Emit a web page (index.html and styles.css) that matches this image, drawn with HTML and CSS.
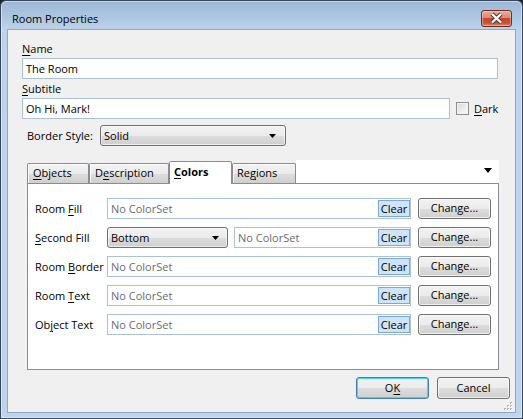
FILE: index.html
```html
<!DOCTYPE html>
<html lang="en">
<head>
<meta charset="utf-8">
<title>Room Properties</title>
<link rel="stylesheet" href="styles.css">
</head>
<body>
<div class="window">
  <div class="titlebar">
    <span class="title">Room Properties</span>
    <div class="close">
      <svg width="31" height="17" viewBox="0 0 31 17">
        <path d="M11 4 L20 12.5 M20 4 L11 12.5" stroke="#4a3a38" stroke-width="4.4" fill="none"/>
        <path d="M11 4 L20 12.5 M20 4 L11 12.5" stroke="#ffffff" stroke-width="2.4" fill="none"/>
      </svg>
    </div>
  </div>
  <div class="client">
    <div class="lbl"><u>N</u>ame</div>
    <div class="input name-input">The Room</div>
    <div class="lbl lbl-sub"><u>S</u>ubtitle</div>
    <div class="subtitle-row">
      <div class="input subtitle-input">Oh Hi, Mark!</div>
      <span class="checkbox"></span>
      <span class="check-label"><u>D</u>ark</span>
    </div>
    <div class="border-row">
      <span class="border-label">Border Style:</span>
      <div class="select border-select">
        <span>Solid</span>
        <svg class="arrow" width="7" height="4" viewBox="0 0 7 4"><path d="M0 0 H7 L3.5 4 Z" fill="#000"/></svg>
      </div>
    </div>
    <div class="tabstrip">
      <div class="tab tab-objects"><u>O</u>bjects</div>
      <div class="tab tab-desc">D<u>e</u>scription</div>
      <div class="tab tab-active tab-colors"><u>C</u>olors</div>
      <div class="tab tab-regions">Re<u>g</u>ions</div>
      <div class="tab-filler">
        <svg width="8" height="5" viewBox="0 0 8 5"><path d="M0 0 H8 L4 5 Z" fill="#000"/></svg>
      </div>
    </div>
    <div class="panel">
      <div class="crow">
        <span class="clabel">Room <u>F</u>ill</span>
        <div class="field"><span class="ph">No ColorSet</span><span class="clear">Clear</span></div>
        <div class="btn change">Change...</div>
      </div>
      <div class="crow">
        <span class="clabel"><u>S</u>econd Fill</span>
        <div class="select fill-select">
          <span>Bottom</span>
          <svg class="arrow" width="7" height="4" viewBox="0 0 7 4"><path d="M0 0 H7 L3.5 4 Z" fill="#000"/></svg>
        </div>
        <div class="field field-short"><span class="ph">No ColorSet</span><span class="clear">Clear</span></div>
        <div class="btn change">Change...</div>
      </div>
      <div class="crow">
        <span class="clabel">Room <u>B</u>order</span>
        <div class="field"><span class="ph">No ColorSet</span><span class="clear">Clear</span></div>
        <div class="btn change">Change...</div>
      </div>
      <div class="crow">
        <span class="clabel">Room <u>T</u>ext</span>
        <div class="field"><span class="ph">No ColorSet</span><span class="clear">Clear</span></div>
        <div class="btn change">Change...</div>
      </div>
      <div class="crow">
        <span class="clabel">Ob<u>j</u>ect Text</span>
        <div class="field"><span class="ph">No ColorSet</span><span class="clear">Clear</span></div>
        <div class="btn change">Change...</div>
      </div>
    </div>
    <div class="buttons">
      <div class="btn btn-default">O<u>K</u></div>
      <div class="btn">Cancel</div>
    </div>
    <svg class="grip" width="8" height="8" viewBox="0 0 8 8">
      <g fill="#b8b8b8">
        <rect x="6" y="0" width="2" height="2"/>
        <rect x="3" y="3" width="2" height="2"/><rect x="6" y="3" width="2" height="2"/>
        <rect x="0" y="6" width="2" height="2"/><rect x="3" y="6" width="2" height="2"/><rect x="6" y="6" width="2" height="2"/>
      </g>
      <g fill="#ffffff">
        <rect x="7" y="1" width="1" height="1"/>
        <rect x="4" y="4" width="1" height="1"/><rect x="7" y="4" width="1" height="1"/>
        <rect x="1" y="7" width="1" height="1"/><rect x="4" y="7" width="1" height="1"/><rect x="7" y="7" width="1" height="1"/>
      </g>
    </svg>
  </div>
</div>
</body>
</html>
```

FILE: styles.css
```css
* {
  box-sizing: border-box;
}

html, body {
  margin: 0;
  padding: 0;
}

body {
  background: #1d232b;
  font-family: "Open Sans", "Noto Sans", sans-serif;
  font-size: 11px;
  color: #000;
  width: 523px;
  height: 419px;
  overflow: hidden;
}

u {
  text-decoration: underline;
  text-underline-offset: 2px;
}

.window {
  width: 523px;
  height: 419px;
  border: 1px solid #39485a;
  border-radius: 6px 6px 0 0;
  background: linear-gradient(180deg, #9db8d6 0px, #afc8e2 18px, #bdd4ec 30px, #bdd4ec 100%);
  box-shadow: inset 0 0 0 1px rgba(255, 255, 255, 0.45);
  padding: 0 7px 6px 7px;
  display: flex;
  flex-direction: column;
}

.titlebar {
  height: 29px;
  display: flex;
  align-items: flex-start;
  flex-shrink: 0;
}

.title {
  padding: 10px 0 0 4px;
  line-height: 15px;
  font-size: 11px;
  color: #000;
}

.close {
  margin: 9px 3px 0 auto;
  width: 31px;
  height: 17px;
  border: 1px solid #6b2b23;
  border-radius: 3px;
  background: linear-gradient(180deg, #e9a99b 0%, #dc8a78 45%, #c8452f 50%, #c6513a 80%, #dc8d6c 100%);
  box-shadow: inset 0 0 0 1px rgba(255, 220, 210, 0.45);
  display: flex;
  align-items: center;
  justify-content: center;
}

.close svg {
  display: block;
  margin: -1px;
}

.client {
  position: relative;
  height: 382px;
  background: #f0f0f0;
  box-shadow: 0 0 0 1px #8ea7c4;
  padding: 11px 0 0 14px;
  display: flex;
  flex-direction: column;
  align-items: flex-start;
}

.lbl {
  height: 15px;
  line-height: 15px;
  margin-bottom: 2px;
}

.lbl-sub {
  margin-top: 2px;
}

.input {
  height: 21px;
  background: #fff;
  border: 1px solid #abc2dd;
  line-height: 19px;
  padding: 0 3px;
  white-space: nowrap;
}

.name-input {
  width: 476px;
}

.subtitle-row {
  display: flex;
  align-items: center;
}

.subtitle-input {
  width: 428px;
}

.checkbox {
  width: 13px;
  height: 13px;
  margin-left: 6px;
  border: 1px solid #8e8f8f;
  background: linear-gradient(135deg, #dcdcdc, #fbfbfb);
  box-shadow: inset 0 0 0 1px #f4f4f4;
}

.check-label {
  margin-left: 5px;
}

.border-row {
  margin-top: 6px;
  display: flex;
  align-items: center;
  height: 21px;
}

.border-label {
  width: 78px;
  padding-left: 5px;
}

.select {
  height: 21px;
  border: 1px solid #707070;
  border-radius: 3px;
  background: linear-gradient(180deg, #f2f2f2 0%, #ebebeb 50%, #dddddd 51%, #cfcfcf 100%);
  display: flex;
  align-items: center;
  justify-content: space-between;
  padding: 0 9px 0 3px;
  box-shadow: inset 0 0 0 1px rgba(255, 255, 255, 0.6);
}

.border-select {
  width: 186px;
}

.fill-select {
  width: 121px;
  padding-right: 8px;
}

.arrow {
  display: block;
}

.tabstrip {
  margin: 15px 0 0 5px;
  width: 472px;
  height: 22px;
  display: flex;
  align-items: flex-end;
  position: relative;
  z-index: 1;
}

.tab {
  height: 20px;
  border: 1px solid #898c95;
  border-bottom: none;
  border-radius: 2px 2px 0 0;
  background: linear-gradient(180deg, #f3f3f3 0%, #ebebeb 50%, #dddddd 51%, #cfcfcf 100%);
  box-shadow: inset 1px 1px 0 rgba(255, 255, 255, 0.8);
  line-height: 17px;
  padding-left: 5px;
  white-space: nowrap;
}

.tab-objects { width: 62px; }
.tab-desc { width: 80px; }
.tab-colors { width: 63px; }
.tab-regions { width: 64px; padding-left: 4px; }

.tab-active {
  height: 23px;
  margin-bottom: -1px;
  background: #fff;
  box-shadow: none;
  font-weight: 700;
  padding: 1px 0 0 4px;
}

.tab-filler {
  flex: 1;
  height: 23px;
  background: #fff;
  display: flex;
  align-items: center;
  justify-content: flex-end;
  padding: 0 7px 2px 0;
}

.tab-filler svg {
  display: block;
}

.panel {
  margin-left: 5px;
  width: 472px;
  height: 187px;
  border: 1px solid #898c95;
  background: #fff;
  padding: 14px 0 0 7px;
}

.crow {
  display: flex;
  align-items: center;
  height: 21px;
  margin-bottom: 8px;
}

.clabel {
  width: 72px;
  white-space: nowrap;
}

.field {
  width: 304px;
  height: 21px;
  border: 1px solid #abc2dd;
  background: #fff;
  display: flex;
  align-items: center;
  padding: 0 0 0 3px;
}

.field-short {
  width: 177px;
  margin-left: 6px;
}

.ph {
  color: #6d6d6d;
  white-space: nowrap;
}

.clear {
  margin-left: auto;
  width: 32px;
  height: 17px;
  border: 1px solid #7da8d8;
  background: #cfe4f8;
  line-height: 15px;
  text-align: center;
}

.btn {
  width: 73px;
  height: 22px;
  border: 1px solid #707070;
  border-radius: 3px;
  background: linear-gradient(180deg, #f2f2f2 0%, #ebebeb 50%, #dddddd 51%, #cfcfcf 100%);
  box-shadow: inset 0 0 0 1px rgba(255, 255, 255, 0.7);
  text-align: center;
  line-height: 19px;
}

.change {
  height: 21px;
  margin-left: 7px;
  line-height: 18px;
}

.buttons {
  margin-top: 7px;
  width: 488px;
  display: flex;
  justify-content: flex-end;
  gap: 8px;
}

.btn-default {
  border-color: #3c7fb1;
  box-shadow: inset 0 0 0 1px #46d2fb;
}

.grip {
  position: absolute;
  right: 3px;
  bottom: 2px;
}
```
